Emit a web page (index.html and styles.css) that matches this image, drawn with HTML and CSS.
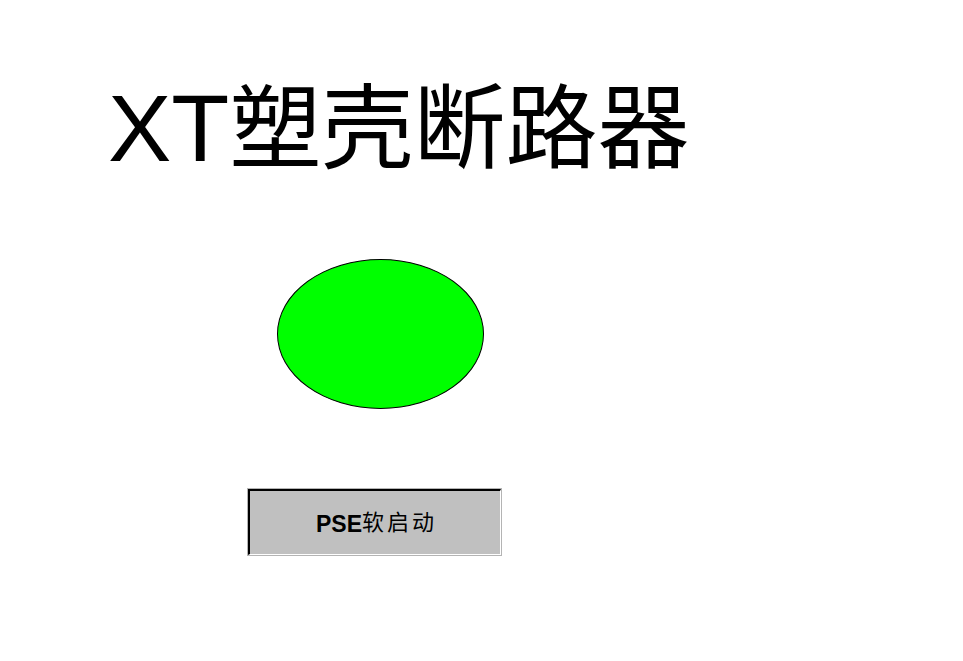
FILE: index.html
```html
<!DOCTYPE html>
<html lang="zh">
<head>
<meta charset="utf-8">
<title>XT塑壳断路器</title>
<link rel="stylesheet" href="styles.css">
</head>
<body>
<div class="page">
  <h1 class="title"><span class="title-latin">XT</span><span class="title-cjk">塑壳断路器</span></h1>
  <div class="lamp"></div>
  <div class="btn-wrap">
    <div class="btn"><span class="btn-label"><span class="latin">PSE</span><span class="cjk">软启动</span></span></div>
  </div>
</div>
</body>
</html>
```

FILE: styles.css
```css
html, body {
  margin: 0;
  padding: 0;
  background: #ffffff;
}

.page {
  width: 963px;
  height: 661px;
  display: flex;
  flex-direction: column;
  align-items: flex-start;
  box-sizing: border-box;
  padding-top: 73px;
}

.title {
  margin: 0 0 0 108px;
  height: 95px;
  font-family: "Liberation Sans", "Noto Sans CJK SC", sans-serif;
  font-weight: normal;
  font-size: 95px;
  line-height: 95px;
  color: #000;
  white-space: nowrap;
}

.title-cjk {
  font-family: "Noto Sans CJK SC", sans-serif;
  font-size: 92px;
}

.lamp {
  margin: 91px 0 0 277px;
  width: 205px;
  height: 148px;
  border: 1px solid #000;
  border-radius: 50%;
  background: #00ff00;
}

.btn-wrap {
  margin: 79px 0 0 247px;
  border: 1px solid #b4b4b4;
}

.btn {
  width: 250px;
  height: 59px;
  padding-bottom: 4px;
  border-top: 2px solid #000;
  border-left: 2px solid #000;
  border-right: 1px solid #ffffff;
  border-bottom: 1px solid #ffffff;
  background: #c0c0c0;
  box-sizing: content-box;
  display: flex;
  align-items: center;
  justify-content: center;
  font-family: "Liberation Sans", "Noto Sans CJK SC", sans-serif;
  font-size: 22px;
  font-weight: bold;
  color: #000;
}

.btn-label {
  white-space: nowrap;
}

.btn .latin {
  font-size: 23px;
}

.btn .cjk {
  font-weight: normal;
  letter-spacing: 3px;
  margin-right: -3px;
  vertical-align: 2px;
}
```
